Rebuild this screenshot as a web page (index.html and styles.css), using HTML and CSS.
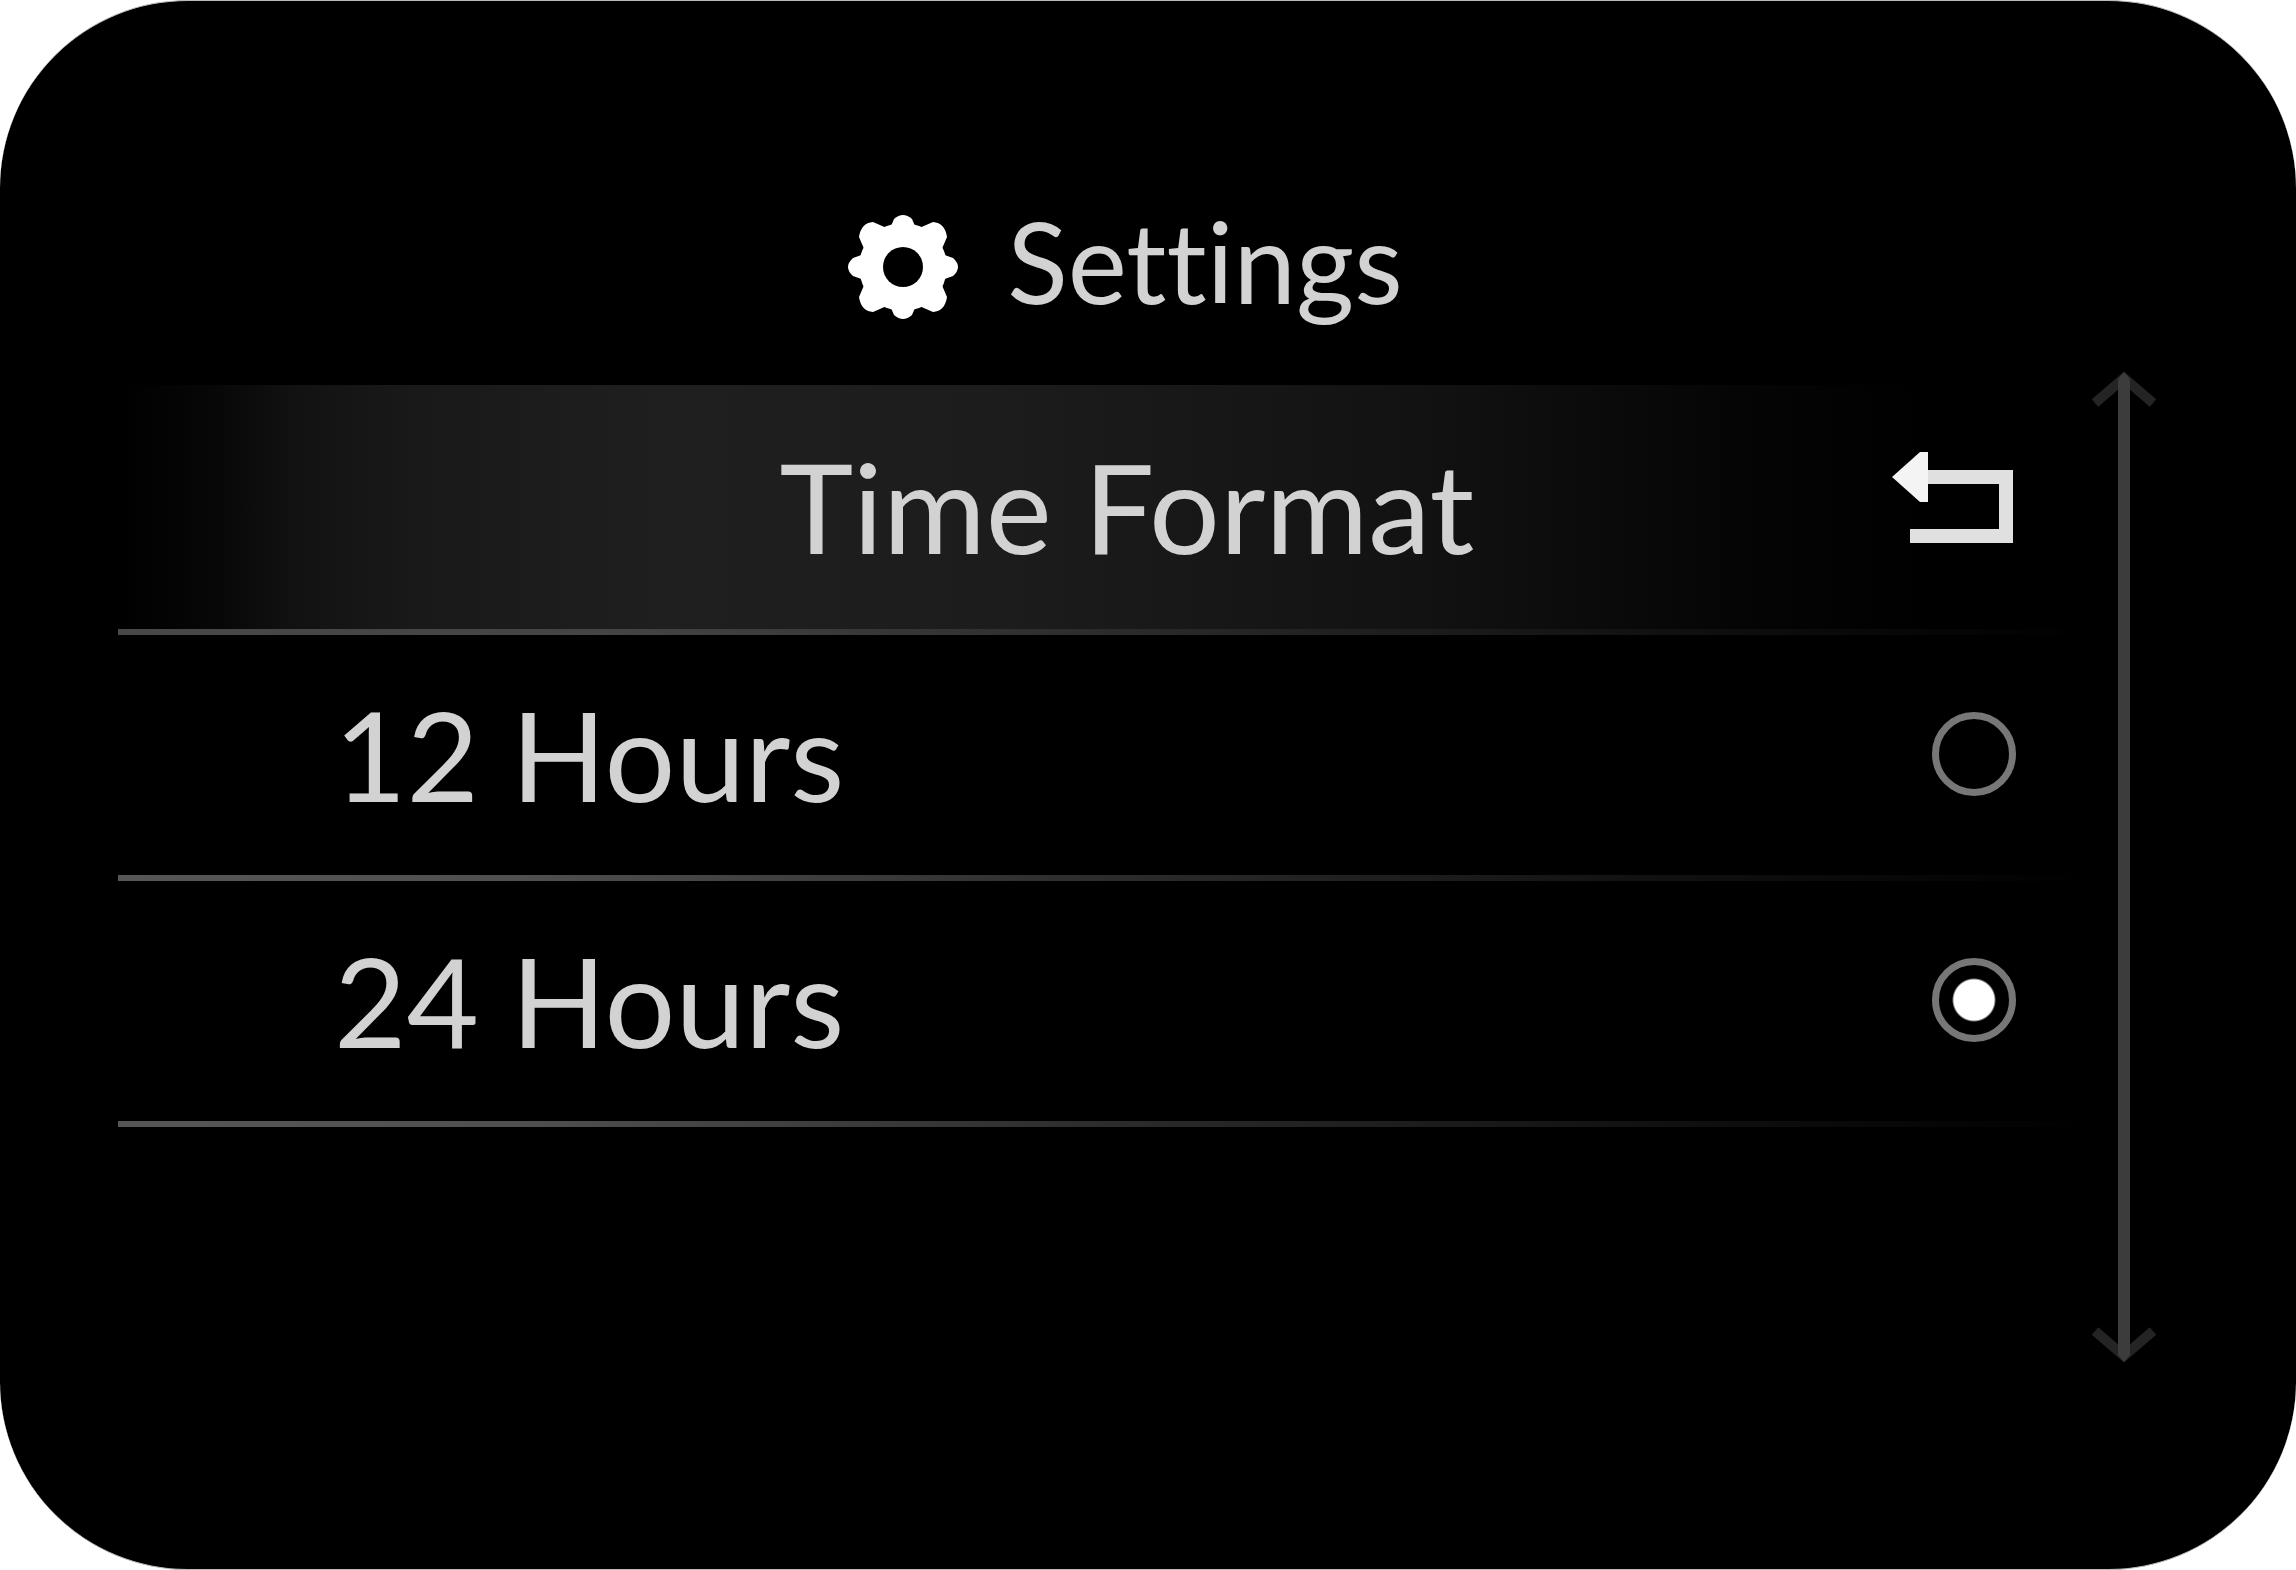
FILE: index.html
```html
<!DOCTYPE html>
<html lang="en">
<head>
<meta charset="UTF-8">
<meta name="viewport" content="width=device-width, initial-scale=1.0">
<title>Settings - Time Format</title>
<link rel="stylesheet" href="styles.css">
</head>
<body>

<main class="screen">
  <header class="top">
    <svg class="gear" viewBox="0 0 112 112" aria-hidden="true">
      <g fill="#fff">
        <circle cx="56" cy="56" r="44"/>
        <path d="M42 20 L47 8 Q56 0 65 8 L70 20 V92 L65 104 Q56 112 47 104 L42 92 Z"/>
        <path d="M20 42 L6 47 Q-4 56 6 65 L20 70 H92 L106 65 Q116 56 106 47 L92 42 Z"/>
        <path d="M12 26 Q14 12 26 11 L42 18 H70 L86 11 Q98 12 100 26 L94 40 V72 L100 86 Q98 100 86 101 L70 94 H42 L26 101 Q14 100 12 86 L18 72 V40 Z"/>
      </g>
      <circle cx="56" cy="56" r="20" fill="#000"/>
    </svg>
    <h1>Settings</h1>
  </header>

  <div class="content">
    <form class="list">
      <div class="row title-row">
        <h2>Time Format</h2>
        <button type="button" class="back" aria-label="Back">
          <svg viewBox="0 0 126 96" aria-hidden="true">
            <path d="M30 27 H116 V86 H20" fill="none" stroke="#e0e0e0" stroke-width="14"/>
            <path d="M2 27 L30 2 H38 V52 H30 Z" fill="#f4f4f4"/>
          </svg>
        </button>
      </div>
      <div class="row">
        <label for="h12">12 Hours</label>
        <input type="radio" name="format" id="h12">
      </div>
      <div class="row">
        <label for="h24">24 Hours</label>
        <input type="radio" name="format" id="h24" checked>
      </div>
    </form>

    <div class="scroll" aria-hidden="true">
      <svg class="tip" viewBox="0 0 72 40"><path d="M7 34 L36 9 L65 34" fill="none" stroke="#242424" stroke-width="10"/><path d="M30 40 V10 L36 3 L42 10 V40 Z" fill="#3c3c3c"/></svg>
      <div class="track"></div>
      <svg class="tip" viewBox="0 0 72 40"><path d="M7 6 L36 31 L65 6" fill="none" stroke="#242424" stroke-width="10"/><path d="M30 0 V30 L36 37 L42 30 V0 Z" fill="#3c3c3c"/></svg>
    </div>
  </div>
</main>

</body>
</html>
```
FILE: styles.css
```css
* {
  box-sizing: border-box;
}
body {
  margin: 0;
  background: #fff;
  color: #d2d2d2;
  font-family: Lato, "Open Sans", sans-serif;
  font-variant-ligatures: none;
}
h1, h2 {
  margin: 0;
  font-weight: 400;
}

.screen {
  min-height: 100vh;
  display: flex;
  flex-direction: column;
  padding: 188px 136px 204px 118px;
  background: #000;
  border-top: 1px solid #bbb;
  border-bottom: 1px solid #bbb;
  border-radius: 188px;
}

/* header */
.top {
  display: flex;
  justify-content: center;
  align-items: center;
  gap: 48px;
  height: 144px;
  margin-bottom: 36px;
  padding-right: 28px;
}
.top h1 {
  font-size: 112px;
  line-height: 144px;
}
.gear {
  width: 112px;
  height: 112px;
  margin-top: 12px;
}

.content {
  flex: 1;
  display: flex;
}

/* options */
.list {
  flex: 1;
  margin-top: 16px;
}
.row {
  display: flex;
  justify-content: space-between;
  align-items: center;
  height: 246px;
  padding: 0 72px 8px 216px;
  font-size: 125px;
  line-height: 160px;
  background: linear-gradient(90deg, #565656, #505050 20%, #2c2c2c 50%, #111 78%, #000) bottom / 100% 6px no-repeat;
}
.title-row {
  display: grid;
  grid-template-columns: 1fr auto 1fr;
  height: 250px;
  padding-left: 120px;
  background:
    linear-gradient(90deg, #484848, #444 25%, #2c2c2c 50%, #111 78%, #000) bottom / 100% 6px no-repeat,
    linear-gradient(90deg, #000, #070707 5%, #121212 9%, #191919 15%, #1f1f1f 28%, #1c1c1c 45%, #121212 66%, #050505 82%, #000 92%);
}
.title-row h2 {
  grid-column: 2;
  font-size: 125px;
}
.back {
  justify-self: end;
  width: 126px;
  height: 96px;
  margin-bottom: 16px;
  padding: 0;
  border: none;
  background: none;
  cursor: pointer;
}
.back svg {
  display: block;
  width: 100%;
}
input[type="radio"] {
  appearance: none;
  width: 84px;
  height: 84px;
  margin: 0;
  border: 7px solid #777;
  border-radius: 50%;
  cursor: pointer;
}
input[type="radio"]:checked {
  background: radial-gradient(circle, #fff 20px, #000 22px);
}

/* scroll indicator */
.scroll {
  width: 72px;
  display: flex;
  flex-direction: column;
  align-items: center;
}
.tip {
  width: 72px;
  height: 40px;
}
.track {
  flex: 1;
  width: 12px;
  background: #3c3c3c;
}
```
